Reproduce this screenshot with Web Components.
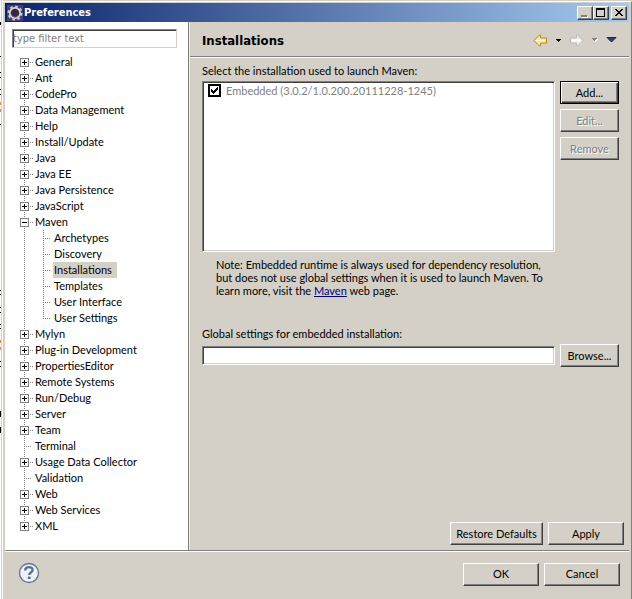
<!DOCTYPE html>
<html lang="en">
<head>
<meta charset="utf-8">
<title>Preferences</title>
<style>
  html, body { height: 100%; }
  body {
    margin: 0;
    --face: #d4d0c8; --shade: #808080; --dark: #404040;
    background: #fff; color: #000;
    font: 11px/13px Lato, "DejaVu Sans Condensed", sans-serif;
  }
</style>
</head>
<body>
<pref-dialog>
  <title-bar slot="title">Preferences</title-bar>
  <pref-tree slot="nav">
    <tree-item first expandable label="General"></tree-item>
    <tree-item expandable label="Ant"></tree-item>
    <tree-item expandable label="CodePro"></tree-item>
    <tree-item expandable label="Data Management"></tree-item>
    <tree-item expandable label="Help"></tree-item>
    <tree-item expandable label="Install/Update"></tree-item>
    <tree-item expandable label="Java"></tree-item>
    <tree-item expandable label="Java EE"></tree-item>
    <tree-item expandable label="Java Persistence"></tree-item>
    <tree-item expandable label="JavaScript"></tree-item>
    <tree-item expandable open label="Maven">
      <tree-item label="Archetypes"></tree-item>
      <tree-item label="Discovery"></tree-item>
      <tree-item selected label="Installations"></tree-item>
      <tree-item label="Templates"></tree-item>
      <tree-item label="User Interface"></tree-item>
      <tree-item last label="User Settings"></tree-item>
    </tree-item>
    <tree-item expandable label="Mylyn"></tree-item>
    <tree-item expandable label="Plug-in Development"></tree-item>
    <tree-item expandable label="PropertiesEditor"></tree-item>
    <tree-item expandable label="Remote Systems"></tree-item>
    <tree-item expandable label="Run/Debug"></tree-item>
    <tree-item expandable label="Server"></tree-item>
    <tree-item expandable label="Team"></tree-item>
    <tree-item label="Terminal"></tree-item>
    <tree-item expandable label="Usage Data Collector"></tree-item>
    <tree-item label="Validation"></tree-item>
    <tree-item expandable label="Web"></tree-item>
    <tree-item expandable label="Web Services"></tree-item>
    <tree-item last expandable label="XML"></tree-item>
  </pref-tree>
  <page-header slot="header">Installations</page-header>
  <installations-page slot="page"></installations-page>
  <dialog-footer slot="footer"></dialog-footer>
</pref-dialog>

<script>
const define = (name, html, setup) => {
  const template = document.createElement('template');
  template.innerHTML = html;
  customElements.define(name, class extends HTMLElement {
    constructor() {
      super();
      this.attachShadow({ mode: 'open' }).append(template.content.cloneNode(true));
    }
    connectedCallback() { if (setup) setup(this, this.shadowRoot); }
  });
};

define('pref-dialog', `
  <style>
    :host { display: grid; grid-template-columns: 3px 1fr; height: 100vh; min-height: 590px; background: var(--face); }
    .behind { display: block; width: 3px; height: 100%; }
    .frame { display: grid; grid-template-rows: auto 1fr auto; background: var(--face);
      border-top: 1px solid #fff; margin-top: 1px; padding: 1px 2px 0 2px; border-right: 1px solid var(--shade); }
    .body { display: grid; grid-template-columns: 184px 1fr; min-height: 0; }
    nav { background: #fff; border-right: 1px solid var(--shade); }
    main { display: flex; flex-direction: column; border-left: 1px solid #eeece8; }
    ::slotted([slot=page]) { flex: 1; }
  </style>
  <svg class="behind" viewBox="0 0 3 599" preserveAspectRatio="xMinYMin slice" aria-hidden="true">
    <path fill="#fff" d="M0 0h3v599H0z"/><path fill="#d4d0c8" d="M1 0h1v599H1z"/>
    <path d="M0 22h1v3H0zM0 56h1v1H0zM0 72h1v1H0zM0 77h1v1H0zM0 89h1v1H0zM0 94h1v1H0zM0 124h1v1H0zM0 290h1v1H0zM0 294h1v1H0zM0 307h1v1H0zM0 312h1v1H0zM0 324h1v1H0zM0 328h1v1H0zM0 361h1v1H0zM0 366h1v1H0zM0 411h1v6H0zM0 427h1v6H0z"/>
    <path fill="#d9904c" d="M0 102h1v3H0zM0 109h1v3H0zM0 340h1v3H0zM0 347h1v3H0z"/>
  </svg>
  <div class="frame">
    <slot name="title"></slot>
    <div class="body">
      <nav><slot name="nav"></slot></nav>
      <main><slot name="header"></slot><slot name="page"></slot></main>
    </div>
    <slot name="footer"></slot>
  </div>`);

define('title-bar', `
  <style>
    :host { display: flex; align-items: center; height: 19px; padding: 0 2px; box-sizing: border-box;
      background: linear-gradient(90deg, #0a246a, #a6caf0); color: #fff; }
    h1 { flex: 1; margin: 0 0 0 1px; font: bold 11px/16px "DejaVu Sans Condensed", sans-serif; }
    button { display: block; width: 16px; height: 14px; padding: 0; background: var(--face);
      border: 1px solid; border-color: #fff var(--dark) var(--dark) #fff;
      box-shadow: inset -1px -1px var(--shade); }
    button:last-child { margin-left: 2px; }
    svg { display: block; }
  </style>
  <svg width="16" height="16" viewBox="0 0 16 16" aria-hidden="true">
    <path fill="#4b3b78" d="M0 0h16v16H0z"/>
    <circle cx="8" cy="8" r="6.6" fill="none" stroke="#c8c8c4" stroke-width="2" stroke-dasharray="2.6 2.58"/>
    <circle cx="8" cy="8" r="5.2" fill="#302848" stroke="#d8d7d0" stroke-width="1.8"/>
    <path d="M4.5 9.5c1 3 5.500 3.500 7 .5" fill="none" stroke="#665e88"/>
  </svg>
  <h1><slot></slot></h1>
  <button aria-label="Minimize"><svg width="14" height="12" shape-rendering="crispEdges"><path d="M4 9h6v2H4z" fill="#fff"/><path d="M3 8h6v2H3z" fill="#808080"/></svg></button>
  <button aria-label="Maximize"><svg width="14" height="12" shape-rendering="crispEdges"><path d="M2 1h9v9H2zM3 3v6h7V3z" fill-rule="evenodd"/></svg></button>
  <button aria-label="Close"><svg width="14" height="12" shape-rendering="crispEdges"><path d="M3 2h2v1h1v1h2V3h1V2h2v1h-1v1H9v1H8v1h1v1h1v1h1v1H9V8H8V7H6v1H5v1H3V8h1V7h1V6h1V5H5V4H4V3H3z"/></svg></button>`);

define('pref-tree', `
  <style>
    :host { display: block; padding: 7px; }
    input { display: block; width: 100%; max-width: 165px; height: 19px; box-sizing: border-box; margin: 0 0 6px; padding: 0;
      border: 1px solid; border-color: var(--shade) var(--face) var(--face) var(--shade);
      box-shadow: inset 1px 1px var(--dark); background: #fff; outline: 0; border-radius: 0;
      font: 11px "DejaVu Sans Condensed", sans-serif; }
    input::placeholder { color: #808080; opacity: 1; }
    .tree { padding-left: 8px; }
  </style>
  <input type="text" aria-label="Filter" placeholder="type filter text">
  <div class="tree" role="tree"><slot></slot></div>`);

define('tree-item', `
  <style>
    :host { display: block; background: repeating-linear-gradient(#808080 0 1px, transparent 1px 2px) 4px 0 / 1px 100% no-repeat; }
    :host([first]) { background-position: 4px 8px; }
    :host([last]) { background-size: 1px 9px; }
    .row { display: flex; align-items: center; height: 16px; white-space: nowrap; }
    button { width: 9px; height: 9px; padding: 0; border: 1px solid #808080; background: #fff; display: none; margin-right: 1px; border-radius: 0; }
    :host([expandable]) button { display: block; }
    button svg { display: block; }
    .line { width: 8px; height: 1px; margin: 0 2px 0 4px;
      background: repeating-linear-gradient(90deg, #808080 0 1px, transparent 1px 2px); }
    :host([expandable]) .line { width: 3px; margin: 0 1px 0 0; }
    .label { line-height: 16px; padding: 0 5px 0 1px; }
    :host([selected]) .label { background: var(--face); }
    :host([open]) .down { display: none; }
    .children { display: none; padding-left: 19px; }
    :host([open]) .children { display: block; }
  </style>
  <div class="row">
    <button><svg width="7" height="7" shape-rendering="crispEdges"><path d="M1 3h5v1H1z"/><path class="down" d="M3 1h1v5H3z"/></svg></button>
    <span class="line"></span><span class="label"></span>
  </div>
  <div class="children" role="group"><slot></slot></div>`,
  (host, root) => {
    const label = host.getAttribute('label');
    const button = root.querySelector('button');
    host.setAttribute('role', 'treeitem');
    root.querySelector('.label').textContent = label;
    button.setAttribute('aria-label', 'Toggle ' + label);
    button.onclick = () => host.toggleAttribute('open');
  });

define('page-header', `
  <style>
    :host { display: flex; align-items: center; height: 34px; padding: 0 12px;
      border-bottom: 1px solid var(--shade); box-shadow: 0 1px #fff; }
    h2 { flex: 1; margin: 3px 0 0; font: bold 13px/16px "DejaVu Sans Condensed", sans-serif; }
    button { padding: 0; border: 0; background: none; display: block; }
    svg { display: block; }
    .tools { display: flex; align-items: center; gap: 8px; margin-top: 2px; }
  </style>
  <h2><slot></slot></h2>
  <div class="tools">
    <button aria-label="Back"><svg width="15" height="13"><path d="M1 6.500 6.500 1h1v3H13.500v5H7.500v3h-1z" fill="#fde9a0" stroke="#c18419"/><path d="M3 6.500h9" stroke="#fffbe4" stroke-width="1"/></svg></button>
    <button aria-label="Back history"><svg width="5" height="3" shape-rendering="crispEdges"><path d="M0 0h5v1H4v1H3v1H2V2H1V1H0z"/></svg></button>
    <button aria-label="Forward" disabled><svg width="15" height="13"><path d="M14 6.500 8.500 1h-1v3H1.500v5H7.500v3h1z" fill="#eeeeec" stroke="#bdbbb6"/><path d="M3 6.500h9" stroke="#fff" stroke-width="2"/></svg></button>
    <button aria-label="Forward history" disabled><svg width="6" height="4" shape-rendering="crispEdges"><path fill="#fff" d="M1 1h5v1H5v1H4v1H3V3H2V2H1z"/><path fill="#808080" d="M0 0h5v1H4v1H3v1H2V2H1V1H0z"/></svg></button>
    <button aria-label="Menu"><svg width="11" height="6"><path d="M1 .5h9L5.500 5z" fill="#3b3b72" stroke="#22224c"/></svg></button>
  </div>`);

define('win-button', `
  <style>
    :host { display: block; }
    button { display: block; width: 100%; height: 23px; padding: 0 4px 1px; background: var(--face); color: #000;
      font: inherit; white-space: nowrap; border: 1px solid; border-radius: 0;
      border-color: #fff var(--dark) var(--dark) #fff; box-shadow: inset -1px -1px var(--shade); }
    :host([primary]) button { border-color: #000;
      box-shadow: inset 1px 1px #fff, inset -1px -1px var(--dark), inset -2px -2px var(--shade); }
    button:disabled { color: #808080; text-shadow: 1px 1px #fff; }
  </style>
  <button type="button"><slot></slot></button>`,
  (host, root) => { root.querySelector('button').disabled = host.hasAttribute('disabled'); });

define('installations-page', `
  <style>
    :host { display: flex; flex-direction: column; padding: 7px 5px 5px 12px; }
    .grid { display: grid; grid-template-columns: 1fr 59px; column-gap: 5px; padding-right: 5px; }
    .caption, .grid > label { grid-column: 1 / -1; }
    .caption { margin-bottom: 4px; }
    .sunken { box-sizing: border-box; background: #fff; border: 1px solid;
      border-color: var(--shade) #fff #fff var(--shade);
      box-shadow: inset 1px 1px var(--dark), inset -1px -1px var(--face); }
    .list { height: 171px; padding: 2px 5px; }
    .buttons { display: flex; flex-direction: column; gap: 5px; }
    .item { display: flex; align-items: center; gap: 5px; color: #808080; height: 13px; }
    .tick { display: grid; }
    .tick > * { grid-area: 1 / 1; }
    .item input { appearance: none; width: 13px; height: 13px; margin: 0; border: 2px solid #000; background: #fff; }
    .tick svg { pointer-events: none; }
    input:not(:checked) + svg { display: none; }
    p { margin: 6px 0 0; padding: 0 4px 0 14px; grid-column: 1; }
    a { color: #000080; }
    .grid > label { margin: 30px 0 4px; }
    .path { width: 100%; height: 19px; margin: 2px 0; padding: 0 4px; font: inherit; outline: 0; border-radius: 0; }
    .actions { display: flex; justify-content: flex-end; gap: 5px; margin-top: auto; }
    .restore { width: 93px; } .apply { width: 76px; }
  </style>
  <div class="grid">
    <div class="caption" id="cap">Select the installation used to launch Maven:</div>
    <div class="list sunken" role="group" aria-labelledby="cap">
      <label class="item"><span class="tick"><input type="checkbox" checked><svg width="13" height="13" shape-rendering="crispEdges"><path d="M3 5h1v1h1v1h1V6h1V5h1V4h1V3h1v3H9v1H8v1H7v1H6v1H5V9H4V8H3z"/></svg></span>Embedded (3.0.2/1.0.200.20111228-1245)</label>
    </div>
    <div class="buttons">
      <win-button primary>Add...</win-button>
      <win-button disabled>Edit...</win-button>
      <win-button disabled>Remove</win-button>
    </div>
    <p>Note: Embedded runtime is always used for dependency resolution, but does not use global settings when it is used to launch Maven. To learn more, visit the <a href="#maven">Maven</a> web page.</p>
    <label for="path">Global settings for embedded installation:</label>
    <input class="path sunken" id="path" type="text">
    <win-button>Browse...</win-button>
  </div>
  <div class="actions">
    <win-button class="restore">Restore Defaults</win-button>
    <win-button class="apply">Apply</win-button>
  </div>`);

define('dialog-footer', `
  <style>
    :host { display: flex; align-items: center; gap: 5px; height: 46px; padding: 0 9px 2px 13px;
      border-top: 1px solid var(--shade); box-shadow: inset 0 1px #fff; }
    .help { margin-right: auto; padding: 0 0 3px; border: 0; background: none; display: block; }
    svg { display: block; }
    win-button { width: 76px; }
  </style>
  <button class="help" aria-label="Help"><svg width="22" height="22" viewBox="0 0 22 22"><circle cx="11" cy="11" r="9.500" fill="#f0f1f4" stroke="#5f7596" stroke-width="1.300"/><path d="M7.200 8.500C7.200 4 14.600 4.200 14.600 8c0 2.500-3.400 2.500-3.400 5" fill="none" stroke="#5a7094" stroke-width="2.400"/><path d="M9.800 14.600h2.800v2.400H9.800z" fill="#5a7094"/></svg></button>
  <win-button>OK</win-button>
  <win-button>Cancel</win-button>`);
</script>
</body>
</html>
